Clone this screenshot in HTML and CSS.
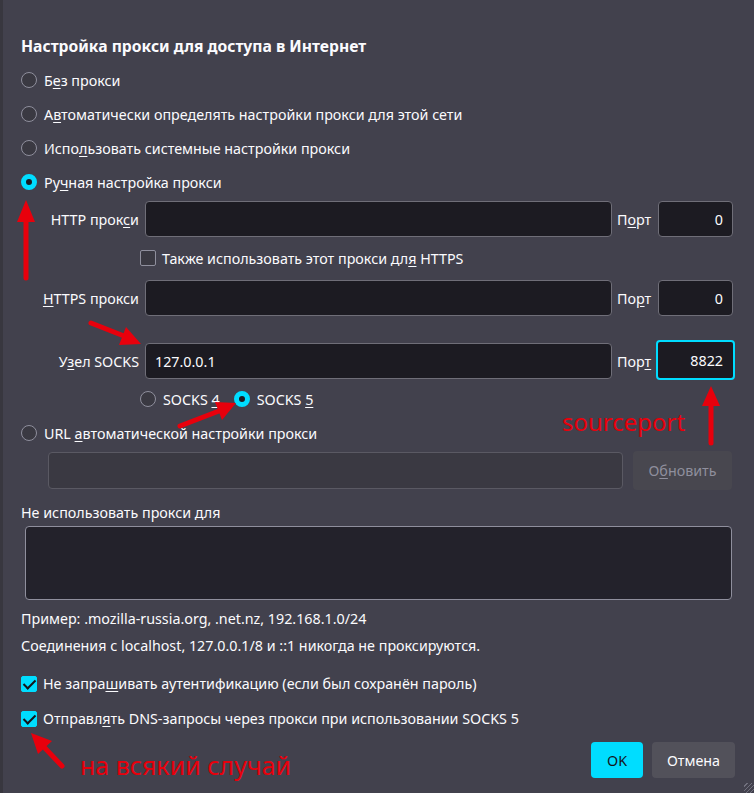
FILE: index.html
```html
<!DOCTYPE html>
<html lang="ru">
<head>
  <meta charset="UTF-8">
  <title>Параметры соединения</title>
  <link rel="stylesheet" href="styles.css">
</head>
<body>
  <div id="dialog">
    <div class="title">Настройка прокси для доступа в Интернет</div>

    <div class="row"><span class="radio"></span><span>Б<u>е</u>з прокси</span></div>
    <div class="row"><span class="radio"></span><span>А<u>в</u>томатически определять настройки прокси для этой сети</span></div>
    <div class="row"><span class="radio"></span><span>Испо<u>л</u>ьзовать системные настройки прокси</span></div>
    <div class="row"><span class="radio on"></span><span>Ру<u>ч</u>ная настройка прокси</span></div>

    <div class="manual">
      <label>HTTP прок<u>с</u>и</label>
      <div class="field"></div>
      <label class="port-label">П<u>о</u>рт</label>
      <div class="field port">0</div>

      <div class="also"><span class="check"></span><span>Также использовать этот прокси дл<u>я</u> HTTPS</span></div>

      <label><u>H</u>TTPS прокси</label>
      <div class="field"></div>
      <label class="port-label">По<u>р</u>т</label>
      <div class="field port">0</div>

      <label class="socks-label">У<u>з</u>ел SOCKS</label>
      <div class="field socks-field">127.0.0.1</div>
      <label class="port-label socks-label">Пор<u>т</u></label>
      <div class="field port focus">8822</div>

      <div class="versions">
        <span class="ver"><span class="radio"></span><span>SOCKS <u>4</u></span></span>
        <span class="ver"><span class="radio on"></span><span>SOCKS <u>5</u></span></span>
      </div>
    </div>

    <div class="row url-row"><span class="radio"></span><span>URL <u>а</u>втоматической настройки прокси</span></div>
    <div class="url-line">
      <div class="field disabled"></div>
      <div class="btn muted"><span>О<u>б</u>новить</span></div>
    </div>

    <div class="plain no-proxy"><span>Не использовать прокси <u>д</u>ля</span></div>
    <div class="field area"></div>
    <div class="plain note first-note">Пример: .mozilla-russia.org, .net.nz, 192.168.1.0/24</div>
    <div class="plain note">Соединения с localhost, 127.0.0.1/8 и ::1 никогда не проксируются.</div>

    <div class="row opt first"><span class="check on"></span><span>Не запра<u>ш</u>ивать аутентификацию (если был сохранён пароль)</span></div>
    <div class="row opt"><span class="check on"></span><span>Отправл<u>я</u>ть DNS-запросы через прокси при использовании SOCKS 5</span></div>

    <div class="actions">
      <div class="btn ok">OK</div>
      <div class="btn cancel">Отмена</div>
    </div>
  </div>

  <div class="grip"></div>

  <svg class="marks" width="754" height="793" viewBox="0 0 754 793">
    <g fill="#e8000c" stroke="#e8000c" stroke-linecap="round">
      <line x1="26" y1="278" x2="26" y2="216" stroke-width="5"/>
      <polygon points="26,200 17,222 35,222" stroke="none"/>

      <line x1="91" y1="323" x2="124" y2="336" stroke-width="5"/>
      <polygon points="141,344 119,345 126,327" stroke="none"/>

      <line x1="180" y1="426" x2="219" y2="411" stroke-width="5"/>
      <polygon points="236,403 222,420 215,402" stroke="none"/>

      <line x1="711" y1="443" x2="711" y2="402" stroke-width="5"/>
      <polygon points="711,386 702,406 720,406" stroke="none"/>

      <line x1="62" y1="766" x2="42" y2="745" stroke-width="5"/>
      <polygon points="31,733 52,741 38,754" stroke="none"/>
    </g>
  </svg>
  <div class="note-red sourceport">sourceport</div>
  <div class="note-red just-in-case">на всякий случай</div>
</body>
</html>
```

FILE: styles.css
```css
body {
  margin: 0;
  width: 754px;
  height: 793px;
  background: #42414d;
  color: #fbfbfe;
  font-family: "Noto Sans", "Open Sans", sans-serif;
  font-size: 14.3px;
  position: relative;
  overflow: hidden;
  border-left: 3px solid #38373f;
  box-sizing: border-box;
}

u {
  text-underline-offset: 2px;
}

#dialog {
  padding: 29px 22px 0 18px;
  display: flex;
  flex-direction: column;
}

.title {
  height: 34px;
  display: flex;
  align-items: center;
  font-weight: bold;
  font-size: 15.7px;
}

.row {
  height: 34px;
  display: flex;
  align-items: center;
}

.radio {
  width: 14px;
  height: 14px;
  border: 1px solid #8f8f9d;
  border-radius: 50%;
  background: #3a3942;
  margin-right: 7px;
  flex: none;
  box-sizing: content-box;
}

.radio.on {
  width: 6px;
  height: 6px;
  border: 5px solid #00ddff;
  background: #1c1b22;
}

.check {
  width: 14px;
  height: 14px;
  border: 1px solid #8f8f9d;
  border-radius: 2px;
  background: #3a3942;
  margin-right: 6px;
  flex: none;
  position: relative;
}

.check.on {
  background: #00ddff;
  border-color: #00ddff;
}

.check.on::after {
  content: "";
  position: absolute;
  left: 4px;
  top: 0px;
  width: 5px;
  height: 10px;
  border: solid #15141a;
  border-width: 0 2px 2px 0;
  transform: rotate(45deg);
}

.manual {
  margin-top: 2px;
  display: grid;
  grid-template-columns: 118px 467px 34px 75px;
  column-gap: 6px;
  align-items: center;
}

.manual label {
  text-align: right;
  white-space: nowrap;
}

.manual .port-label {
  text-align: left;
  margin-left: -1px;
}

.field {
  height: 36px;
  box-sizing: border-box;
  background: #1c1b22;
  border: 1px solid #6f6e78;
  border-radius: 4px;
  display: flex;
  align-items: center;
  padding: 0 9px;
}

.port {
  justify-content: flex-end;
}

.socks-field,
.socks-label {
  margin-top: 26px;
}

.port.focus {
  border: 2px solid #00ddff;
  margin: 24px -2px 0;
  height: 40px;
  padding-right: 10px;
}

.also {
  grid-column: 2 / 5;
  height: 43px;
  display: flex;
  align-items: center;
  margin-left: -5px;
  padding-bottom: 1px;
  box-sizing: border-box;
}

.versions {
  grid-column: 2 / 5;
  height: 38px;
  display: flex;
  align-items: center;
  margin-left: -5px;
  gap: 14px;
}

.ver {
  display: flex;
  align-items: center;
}

.url-row {
  margin-top: -2px;
}

.url-line {
  display: flex;
  align-items: center;
  margin-left: 27px;
  margin-top: 1px;
  gap: 10px;
}

.field.disabled {
  flex: 1;
  height: 37px;
  background: #3a3942;
  border-color: #5a5963;
}

.btn {
  height: 36px;
  padding: 0 17px;
  border-radius: 4px;
  background: #52515a;
  display: flex;
  align-items: center;
  justify-content: center;
}

.btn.muted {
  height: 39px;
  width: 99px;
  padding: 0;
  background: #48474f;
  color: #8f8f9d;
}

.plain {
  display: flex;
  align-items: center;
}

.no-proxy {
  height: 28px;
  margin-top: 8px;
}

.field.area {
  height: 74px;
  margin-left: 4px;
  background: #23222b;
  border-color: #8f8f9d;
}

.note {
  height: 27px;
}

.first-note {
  margin-top: 5px;
}

.opt.first {
  margin-top: 7px;
}

.opt {
  height: 35px;
}

.actions {
  display: flex;
  justify-content: flex-end;
  gap: 9px;
  margin-top: 6px;
  margin-right: -3px;
}

.btn.ok {
  width: 52px;
  padding: 0;
  background: #00ddff;
  color: #15141a;
}

.btn.cancel {
  width: 83px;
  padding: 0;
}

.grip {
  position: absolute;
  right: 0;
  bottom: 0;
  width: 10px;
  height: 10px;
  background: repeating-linear-gradient(135deg, transparent 0 2px, #8f8f9d 2px 3px);
  opacity: 0.6;
}

.marks {
  position: absolute;
  left: -3px;
  top: 0;
  pointer-events: none;
}

.note-red {
  position: absolute;
  color: #e8000c;
  font-family: "Noto Sans", sans-serif;
  font-size: 24px;
  line-height: 1;
  white-space: nowrap;
}

.sourceport {
  left: 559px;
  top: 410px;
}

.just-in-case {
  left: 77px;
  top: 753px;
  font-size: 25px;
}
```
